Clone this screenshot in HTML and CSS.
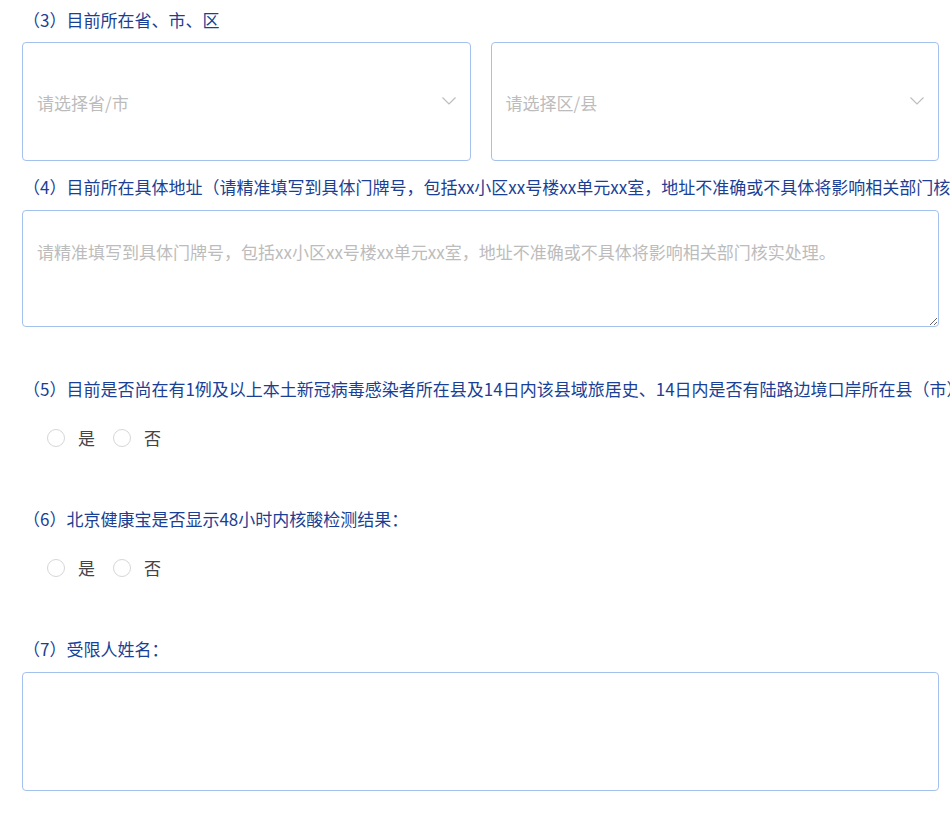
FILE: index.html
```html
<!DOCTYPE html>
<html lang="zh-CN">
<head>
<meta charset="utf-8">
<title>表单</title>
<link rel="stylesheet" href="styles.css">
</head>
<body>
<div class="form">
  <div class="q q3">
    <div class="label">（3）目前所在省、市、区</div>
    <div class="select-row">
      <div class="select">
        <span class="ph">请选择省/市</span>
        <svg class="chev" width="14" height="8" viewBox="0 0 14 8"><path d="M0.5 0.5 L7 7 L13.5 0.5" fill="none" stroke="#bdbdbd" stroke-width="1.2"/></svg>
      </div>
      <div class="select">
        <span class="ph">请选择区/县</span>
        <svg class="chev" width="14" height="8" viewBox="0 0 14 8"><path d="M0.5 0.5 L7 7 L13.5 0.5" fill="none" stroke="#bdbdbd" stroke-width="1.2"/></svg>
      </div>
    </div>
  </div>

  <div class="q q4">
    <div class="label">（4）目前所在具体地址（请精准填写到具体门牌号，包括xx小区xx号楼xx单元xx室，地址不准确或不具体将影响相关部门核实处理。）</div>
    <textarea class="area" placeholder="请精准填写到具体门牌号，包括xx小区xx号楼xx单元xx室，地址不准确或不具体将影响相关部门核实处理。"></textarea>
  </div>

  <div class="q q5">
    <div class="label">（5）目前是否尚在有1例及以上本土新冠病毒感染者所在县及14日内该县域旅居史、14日内是否有陆路边境口岸所在县（市）旅居史：</div>
    <div class="radios">
      <span class="radio"><span class="dot"></span><span class="rtext">是</span></span>
      <span class="radio"><span class="dot"></span><span class="rtext">否</span></span>
    </div>
  </div>

  <div class="q q6">
    <div class="label">（6）北京健康宝是否显示48小时内核酸检测结果：</div>
    <div class="radios">
      <span class="radio"><span class="dot"></span><span class="rtext">是</span></span>
      <span class="radio"><span class="dot"></span><span class="rtext">否</span></span>
    </div>
  </div>

  <div class="q q7">
    <div class="label">（7）受限人姓名：</div>
    <div class="input"></div>
  </div>
</div>
</body>
</html>
```

FILE: styles.css
```css
html, body {
  margin: 0;
  padding: 0;
  overflow: hidden;
  background: #fff;
}
body {
  font-family: "Noto Sans CJK SC", "Noto Sans", sans-serif;
  font-size: 17px;
}
.form {
  padding: 8px 11px 0 22px;
  width: 917px;
}
.label {
  color: #1a3f95;
  font-size: 17px;
  line-height: 24px;
  white-space: nowrap;
  overflow: hidden;
  margin-right: -11px;
  padding-left: 1px;
}
.q3 .label { margin-bottom: 10px; }
.select-row {
  display: grid;
  grid-template-columns: 1fr 1fr;
  column-gap: 20px;
}
.select {
  box-sizing: border-box;
  height: 119px;
  border: 1px solid #a3c1ec;
  border-radius: 4px;
  display: flex;
  align-items: center;
  justify-content: space-between;
  padding: 2px 14px 0 14px;
}
.ph {
  color: #bcbcbc;
  line-height: 24px;
}
.chev { margin-top: -4px; }
.q4 { margin-top: 14px; }
.q4 .label { margin-bottom: 11px; }
.area {
  display: block;
  box-sizing: border-box;
  width: 100%;
  height: 117px;
  margin: 0;
  border: 1px solid #a3c1ec;
  border-radius: 4px;
  padding: 29px 14px 10px 14px;
  font-family: "Noto Sans CJK SC", "Noto Sans", sans-serif;
  font-size: 17px;
  line-height: 24px;
  outline: none;
  resize: both;
}
.area::placeholder { color: #bcbcbc; }
.q5 { margin-top: 50px; }
.radios {
  margin-top: 25px;
  display: flex;
  align-items: center;
  height: 24px;
  padding-left: 25px;
  gap: 18px;
}
.radio {
  display: flex;
  align-items: center;
  gap: 13px;
}
.dot {
  box-sizing: border-box;
  width: 18px;
  height: 18px;
  border: 1px solid #d6d6d6;
  border-radius: 50%;
}
.rtext {
  color: #444;
  line-height: 24px;
}
.q6 { margin-top: 57px; }
.q7 { margin-top: 57px; }
.q7 .label { margin-bottom: 11px; }
.input {
  box-sizing: border-box;
  height: 119px;
  border: 1px solid #a3c1ec;
  border-radius: 4px;
}
```
